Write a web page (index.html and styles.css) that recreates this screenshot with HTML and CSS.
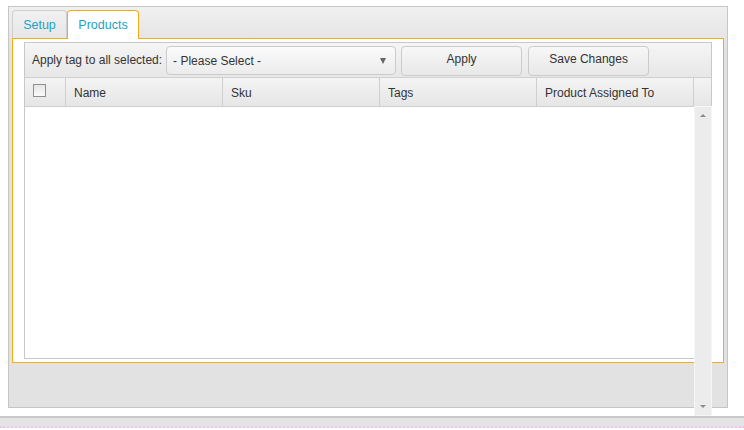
FILE: index.html
```html
<!DOCTYPE html>
<html lang="en">
<head>
    <meta charset="UTF-8">
    <meta name="viewport" content="width=device-width, initial-scale=1.0">
    <title>Product Tags</title>
    <link rel="stylesheet" href="styles.css">
</head>
<body>
    <div class="panel">
        <ul class="tabs">
            <li class="tab">Setup</li>
            <li class="tab active">Products</li>
        </ul>

        <div class="tab-body">
            <div class="grid">
                <div class="toolbar">
                    <label for="tag-select">Apply tag to all selected:</label>
                    <div class="select" id="tag-select">
                        <span>- Please Select -</span>
                        <span class="arrow"></span>
                    </div>
                    <button class="btn btn-apply">Apply</button>
                    <button class="btn btn-save">Save Changes</button>
                </div>

                <div class="grid-header">
                    <div class="cell cell-check"><span class="checkbox"></span></div>
                    <div class="cell">Name</div>
                    <div class="cell">Sku</div>
                    <div class="cell">Tags</div>
                    <div class="cell">Product Assigned To</div>
                    <div class="cell cell-spacer"></div>
                </div>

                <div class="grid-body"></div>
            </div>
        </div>

        <!-- vertical scroller of the grid body, it runs past the panel -->
        <div class="scroller">
            <span class="scroll-up"></span>
            <span class="scroll-down"></span>
        </div>
    </div>

    <div class="footer-strip"></div>
</body>
</html>
```

FILE: styles.css
```css
* {
    box-sizing: border-box;
}
body {
    margin: 0;
    background: #fff;
    font-family: Arial, "Liberation Sans", sans-serif;
    font-size: 12px;
    color: #333;
}
.panel {
    position: relative;
    margin: 6px 0 0 8px;
    width: 720px;
    height: 402px;
    padding: 3px 3px 0 3px;
    border: 1px solid #c6c6c6;
    background: linear-gradient(#f0f0f0, #e2e2e2 40px, #e2e2e2);
}
.tabs {
    display: flex;
    list-style: none;
    margin: 0;
    padding: 0;
    height: 29px;
    position: relative;
    z-index: 1;
}
.tab {
    width: 55px;
    height: 28px;
    padding-top: 7px;
    text-align: center;
    font-size: 12.5px;
    color: #1aa3c9;
    border: 1px solid #cfcfcf;
    border-bottom: none;
    border-radius: 4px 4px 0 0;
    background: linear-gradient(#f1f1f1, #e6e6e6);
}
.tab.active {
    width: 72px;
    height: 29px;
    background: #fff;
    border-color: #f7ab14;
}
.tab-body {
    width: 712px;
    height: 325px;
    margin-top: -1px;
    padding: 3px 11px 3px 11px;
    border: 1px solid #f7ab14;
    background: #fff;
}
.grid {
    height: 317px;
    border: 1px solid #c8c8c8;
    display: flex;
    flex-direction: column;
}
.toolbar {
    display: flex;
    align-items: center;
    height: 35px;
    padding: 0 0 0 7px;
    border-bottom: 1px solid #d0d0d0;
    background: linear-gradient(#f5f5f5, #e7e7e7);
}
.toolbar label {
    margin-right: 4px;
}
.select {
    display: flex;
    justify-content: space-between;
    align-items: center;
    width: 230px;
    height: 29px;
    margin-top: 1px;
    padding: 0 9px 0 6px;
    border: 1px solid #cbcbcb;
    border-radius: 4px;
    background: linear-gradient(#fafafa, #ececec);
}
.select .arrow {
    width: 0;
    height: 0;
    margin-top: 1px;
    border-left: 3.5px solid transparent;
    border-right: 3.5px solid transparent;
    border-top: 6px solid #666;
}
.btn {
    height: 30px;
    margin-top: 2px;
    border: 1px solid #cbcbcb;
    border-radius: 4px;
    background: linear-gradient(#f7f7f7, #e8e8e8);
    font-family: inherit;
    font-size: 12px;
    color: #333;
    padding: 0 0 4px;
}
.btn-apply {
    width: 121px;
    margin-left: 5px;
}
.btn-save {
    width: 121px;
    margin-left: 6px;
}
.grid-header {
    display: flex;
    height: 29px;
    border-bottom: 1px solid #cfcfcf;
    background: linear-gradient(#f4f4f4, #e6e6e6);
}
.cell {
    width: 157px;
    padding: 8px 0 0 8px;
    border-right: 1px solid #cfcfcf;
}
.cell-check {
    width: 41px;
    padding: 6px 0 0 8px;
}
.cell-spacer {
    flex: 1;
    border-right: none;
}
.checkbox {
    display: block;
    width: 13px;
    height: 13px;
    border: 1px solid #8f8f8f;
    background: linear-gradient(#e6e6e6, #fafafa);
}
.grid-body {
    flex: 1;
    background: #fff;
}
.scroller {
    position: absolute;
    left: 685px;
    top: 99px;
    width: 18px;
    height: 310px;
    border: 1px solid #f6f6f6;
    background: #ececec;
}
.scroll-up,
.scroll-down {
    position: absolute;
    left: 5px;
    width: 0;
    height: 0;
    border-left: 3px solid transparent;
    border-right: 3px solid transparent;
}
.scroll-up {
    top: 7px;
    border-bottom: 3px solid #8c8c8c;
}
.scroll-down {
    bottom: 7px;
    border-top: 3px solid #8c8c8c;
}
.footer-strip {
    margin-top: 8px;
    height: 12px;
    border-top: 2px solid #c8c8c8;
    background: #e4e4e4;
    border-bottom: 2px dotted #eec6ea;
}
```
